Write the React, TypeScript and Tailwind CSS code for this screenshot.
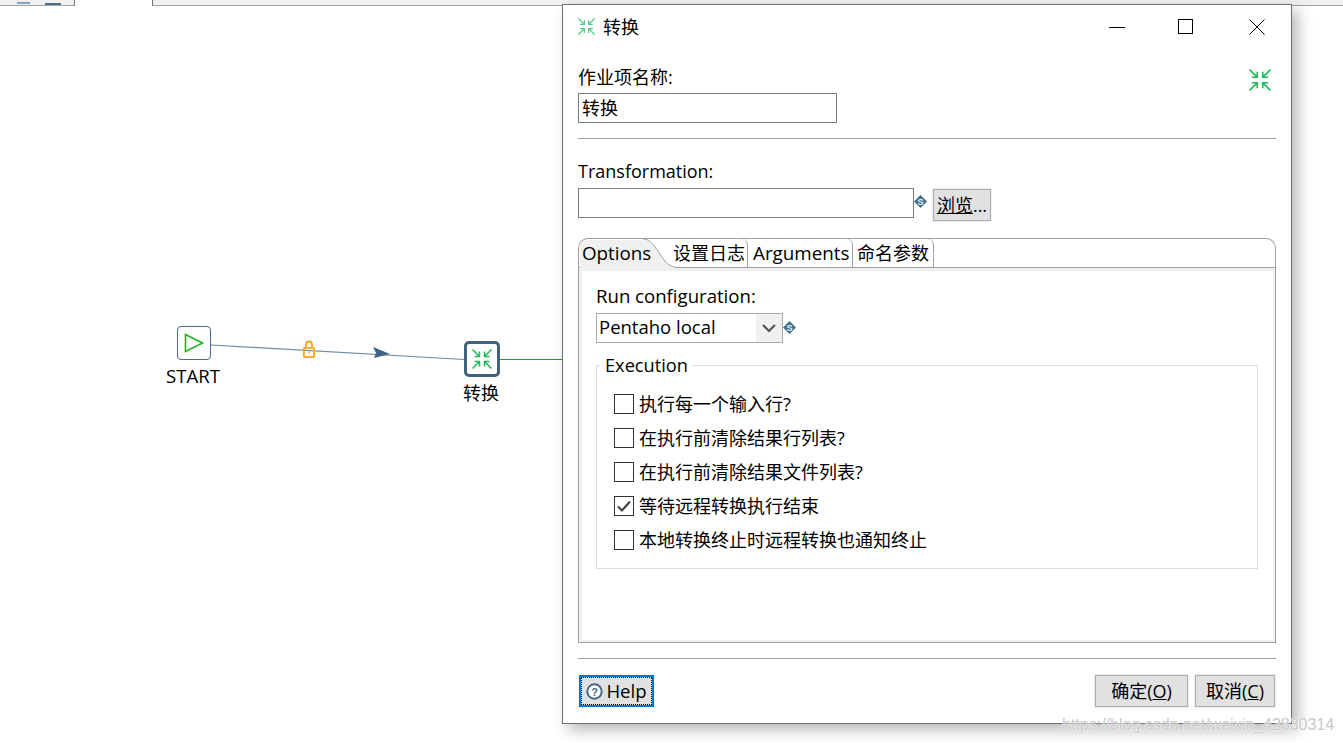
const FONT = "font-['Open_Sans','Noto_Sans_CJK_SC',sans-serif]";

function Shrink({ size, className = "" }: { size: number; className?: string }) {
  return (
    <svg width={size} height={size} viewBox="0 0 20 20" fill="none" stroke="#1fb957" strokeWidth="1.5" className={className}>
      <path d="M0.5 0.5 7.5 7.5M7.5 2.5V7.5H2.5" />
      <path d="M19.5 0.5 12.5 7.5M12.5 2.5V7.5H17.5" />
      <path d="M0.5 19.5 7.5 12.5M7.5 17.5V12.5H2.5" />
      <path d="M19.5 19.5 12.5 12.5M12.5 17.5V12.5H17.5" />
    </svg>
  );
}

function VarIcon({ className = "" }: { className?: string }) {
  return (
    <svg width="13" height="13" viewBox="0 0 13 13" className={className}>
      <path d="M6.5 0 13 6.5 6.5 13 0 6.5Z" fill="#44708f" />
      <text x="6.5" y="9.6" textAnchor="middle" fontSize="9" fontWeight="700" fill="#e6eef4" fontFamily="Liberation Sans">S</text>
    </svg>
  );
}

function Check({ label, checked }: { label: string; checked?: boolean }) {
  return (
    <div className="flex items-center h-[20px] mb-[14px]">
      <div className="w-[20px] h-[20px] border border-[#333333] bg-white flex items-center justify-center shrink-0">
        {checked && (
          <svg width="16" height="14" viewBox="0 0 16 14" fill="none" stroke="#444444" strokeWidth="2.2">
            <path d="M2 7.5 6 11.5 14 2.5" />
          </svg>
        )}
      </div>
      <span className="ml-[5px] text-[18px] leading-[24px] text-black whitespace-nowrap">{label}</span>
    </div>
  );
}

function PushButton({ children, className = "" }: { children: React.ReactNode; className?: string }) {
  return (
    <div className={"h-[32px] bg-[#e1e1e1] border border-[#adadad] outline-1 outline-[#f0f0f0] flex items-center justify-center text-[18px] text-black whitespace-nowrap " + className}>
      {children}
    </div>
  );
}

function Canvas() {
  return (
    <div className="flex-1 relative bg-white">
      <svg width="563" height="420" className="absolute left-0 top-0" fill="none">
        <path d="M211 339 464 353.5" stroke="#6f8ba3" strokeWidth="1.2" />
        <path d="M373 341 390 348 374 352 376 347Z" fill="#3f6383" />
        <path d="M499 353.5H563" stroke="#1f9e2c" strokeWidth="1" />
        <g stroke="#ffa31a" strokeWidth="1.8">
          <rect x="303.9" y="341.9" width="10.2" height="9.2" rx="0.5" />
          <path d="M306 341.5V338.5a3 3 0 0 1 6 0V341.5" />
        </g>
        <rect x="308.2" y="345.5" width="1.6" height="1.6" fill="#ffa31a" />
      </svg>
      <div className="absolute left-[177px] top-[320px] w-[34px] h-[34px] border border-[#4a6c8a] rounded-[4px] bg-white flex items-center justify-center">
        <svg width="22" height="22" viewBox="0 0 22 22" fill="none" stroke="#1eb31e" strokeWidth="1.6">
          <path d="M2.5 2.5 19.5 11 2.5 19.5Z" />
        </svg>
      </div>
      <div className="absolute left-[153px] top-[358px] w-[80px] text-center text-[18.6px] leading-[24px] text-black">START</div>
      <div className="absolute left-[464px] top-[335px] w-[36px] h-[36px] border-[3px] border-[#41617f] rounded-[5px] bg-white flex items-center justify-center">
        <Shrink size={20} />
      </div>
      <div className="absolute left-[441px] top-[375px] w-[80px] text-center text-[18px] leading-[24px] text-black">转换</div>
    </div>
  );
}

function Tabs() {
  return (
    <div className="mt-[17px] h-[405px] flex flex-col shrink-0">
      <div className="relative h-[29px] flex border border-b-0 border-[#a0a0a0] rounded-t-[10px] shrink-0">
        <div className="w-[94px] h-[28px] relative text-[18.8px] leading-[28px] text-black">
          <svg width="95" height="29" className="absolute left-0 top-0" fill="none">
            <path d="M1 28V10Q1 1 10 1H64C72 1 76 8 81 15 85 22 90 27.5 95 27.5V29H1Z" fill="#f0f0f0" />
            <path d="M64 0C72 0 76 8 81 15 85 22 90 27.5 95 27.5" stroke="#a0a0a0" />
          </svg>
          <span className="absolute left-[3px] top-0">Options</span>
        </div>
        <div className="w-[75px] text-[18px] leading-[28px] text-black whitespace-nowrap border-r border-[#a0a0a0] rounded-tr-[6px]">设置日志</div>
        <div className="w-[105px] pl-[5px] text-[18.8px] leading-[28px] text-black whitespace-nowrap border-r border-[#a0a0a0] rounded-tr-[6px]">Arguments</div>
        <div className="w-[81px] pl-[4px] text-[18px] leading-[28px] text-black whitespace-nowrap border-r border-[#a0a0a0] rounded-tr-[6px]">命名参数</div>
      </div>
      <div className="flex-1 border border-[#a0a0a0] bg-white px-[17px] pt-[16px] shadow-[inset_3px_3px_0_#f0f0f0,inset_-2px_-2px_0_#f0f0f0] min-h-0">
        <div className="text-[18.6px] leading-[24px] text-black">Run configuration:</div>
        <div className="mt-[5px] flex items-center">
          <div className="w-[187px] h-[30px] border border-[#a9a9b1] flex items-center justify-between bg-white">
            <span className="ml-[2px] -mt-[2px] text-[18.5px] leading-[24px] text-black">Pentaho local</span>
            <div className="w-[26px] h-full bg-[#f0f0f0] flex items-center justify-center">
              <svg width="14" height="9" viewBox="0 0 14 9" fill="none" stroke="#555555" strokeWidth="2.2">
                <path d="M1 1 7 7 13 1" />
              </svg>
            </div>
          </div>
          <VarIcon className="-mt-[2px]" />
        </div>
        <div className="relative mt-[22px] h-[204px] border border-[#dcdcdc] pt-[28px] pl-[17px]">
          <div className="absolute left-[4px] top-[-13px] bg-white px-[4px] text-[18.2px] leading-[24px] text-black">Execution</div>
          <Check label="执行每一个输入行?" />
          <Check label="在执行前清除结果行列表?" />
          <Check label="在执行前清除结果文件列表?" />
          <Check label="等待远程转换执行结束" checked />
          <Check label="本地转换终止时远程转换也通知终止" />
        </div>
      </div>
    </div>
  );
}

function Dialog() {
  return (
    <div className="absolute left-[562px] top-[4px] w-[730px] h-[720px] bg-white border border-[#6e6e6e] shadow-[6px_6px_14px_rgba(0,0,0,0.28)] px-[15px] flex flex-col">
      <div className="h-[43px] flex items-center justify-between shrink-0">
        <div className="flex items-center">
          <Shrink size={17} className="opacity-75" />
          <span className="ml-[8px] text-[18px] text-black leading-[24px]">转换</span>
        </div>
        <div className="flex items-center mr-[11px]">
          <svg width="16" height="16" viewBox="0 0 16 16" fill="none" stroke="#000" className="mr-[53px]"><path d="M0 8.5H16" /></svg>
          <svg width="16" height="16" viewBox="0 0 16 16" fill="none" stroke="#000" className="mr-[55px]"><rect x="0.5" y="0.5" width="14" height="14" /></svg>
          <svg width="16" height="16" viewBox="0 0 16 16" fill="none" stroke="#000"><path d="M0.5 0.5 15.5 15.5M15.5 0.5 0.5 15.5" /></svg>
        </div>
      </div>
      <div className="relative h-[45px] shrink-0">
        <div className="pt-[17px] text-[18px] leading-[24px] text-black">作业项名称:</div>
        <Shrink size={22} className="absolute right-[5px] top-[21px]" />
      </div>
      <div className="w-[259px] h-[30px] border border-[#7a7a7a] pl-[3px] text-[18px] leading-[28px] text-black shrink-0">转换</div>
      <div className="h-px bg-[#a0a0a0] mt-[15px] shrink-0" />
      <div className="mt-[20px] text-[18px] leading-[24px] text-black shrink-0">Transformation:</div>
      <div className="mt-[5px] flex items-start shrink-0">
        <div className="w-[336px] h-[30px] border border-[#7a7a7a] bg-white" />
        <VarIcon className="mt-[7px]" />
        <PushButton className="ml-[6px] w-[58px] mt-px"><span className="underline decoration-1">浏览</span>...</PushButton>
      </div>
      <Tabs />
      <div className="h-px bg-[#a0a0a0] mt-[15px] shrink-0" />
      <div className="mt-[16px] flex items-center justify-between shrink-0">
        <div className="ml-px w-[75px] h-[32px] border-[2px] border-[#0078d7] bg-[#e1e1e1] outline-1 outline-[#f0f0f0] flex items-center justify-center text-[18.6px] text-black">
          <div className="w-full h-full border border-dotted border-black flex items-center justify-center">
            <svg width="17" height="17" viewBox="0 0 17 17" className="mr-[3px]" fill="none">
              <circle cx="8.5" cy="8.5" r="7.2" fill="#fff" stroke="#45698a" strokeWidth="2" />
              <text x="8.5" y="12.5" textAnchor="middle" fontSize="11" fontWeight="700" fill="#45698a" fontFamily="Liberation Sans">?</text>
            </svg>
            Help
          </div>
        </div>
        <div className="flex items-center">
          <PushButton className="w-[93px]">确定(<span className="underline">O</span>)</PushButton>
          <PushButton className="ml-[7px] w-[80px] mr-px">取消(<span className="underline">C</span>)</PushButton>
        </div>
      </div>
    </div>
  );
}

export default function App() {
  return (
    <div className={"relative w-[1343px] h-[743px] overflow-hidden bg-white flex flex-col " + FONT}>
      <div className="h-[6px] bg-[#f0f0f0] border-b border-[#a3a3a3] flex items-end shrink-0">
        <div className="ml-[17px] w-[13px] h-[2px] mb-px bg-[#8aa6bd]" />
        <div className="ml-[15px] w-[16px] h-[2px] mb-0 bg-[#4a6c8a]" />
        <div className="ml-[13px] w-[79px] h-[6px] -mb-px bg-white border-x border-[#777777]" />
      </div>
      <Canvas />
      <Dialog />
      <div className="absolute left-[1062px] top-[715px] text-[16px] leading-[20px] font-['Liberation_Sans',sans-serif] text-[#c9c9c9] [text-shadow:0_0_2px_rgba(255,255,255,0.9),0_0_2px_rgba(255,255,255,0.9)] whitespace-nowrap">
        https://blog.csdn.net/weixin_42830314
      </div>
    </div>
  );
}
